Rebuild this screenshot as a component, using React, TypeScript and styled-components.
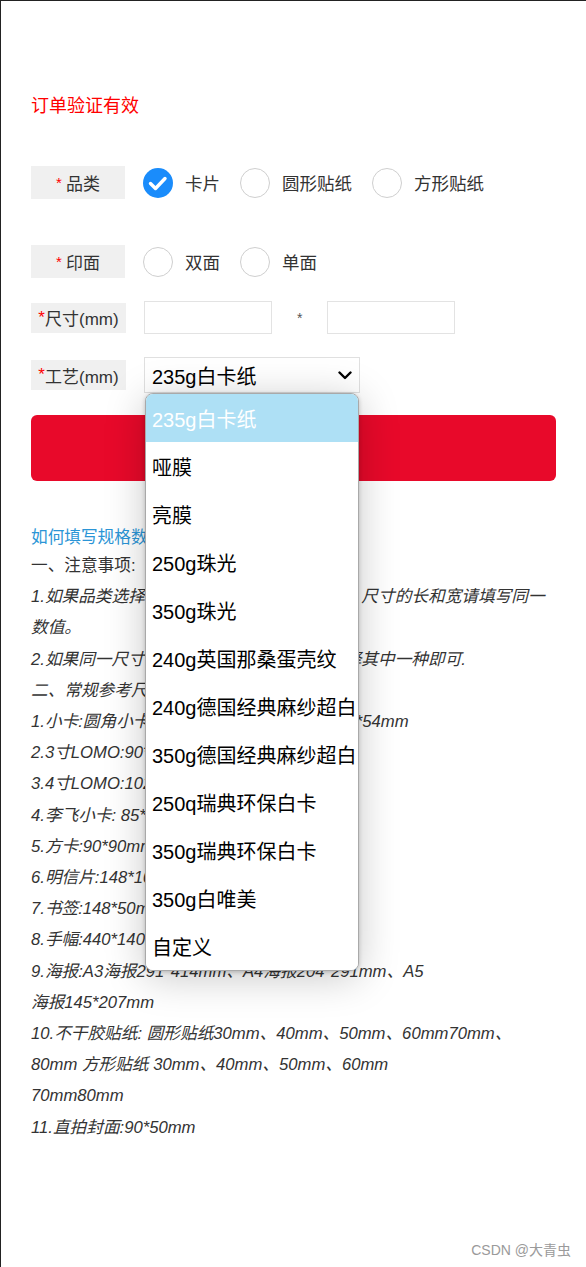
import React from "react";
import styled, { createGlobalStyle } from "styled-components";

const GlobalStyle = createGlobalStyle`
  html, body { margin: 0; padding: 0; background: #fff; }
  body { font-family: "Liberation Sans", "Noto Sans CJK SC", sans-serif; }
  * { box-sizing: border-box; }
`;

const Page = styled.div`
  position: relative;
  width: 586px;
  min-height: 1267px;
  border-top: 1px solid #222;
  border-left: 1px solid #222;
  padding: 93px 30px 0 30px;
  background: #fff;
`;

const Title = styled.div`
  color: #ff0000;
  font-size: 18px;
  line-height: 24px;
`;

const Form = styled.form`
  display: flex;
  flex-direction: column;
  margin: 48px 0 0 0;
`;

const FieldRow = styled.div<{ $gap: number }>`
  display: flex;
  align-items: center;
  margin-top: ${(p) => p.$gap}px;
`;

const FieldLabel = styled.div<{ $wide?: boolean }>`
  display: flex;
  align-items: center;
  justify-content: center;
  flex: none;
  width: ${(p) => (p.$wide ? 95 : 94)}px;
  height: ${(p) => (p.$wide ? 30 : 33)}px;
  background: #f0f0f0;
  color: #333;
  font-size: 17px;
  white-space: nowrap;
`;

const Star = styled.span<{ $spaced?: boolean }>`
  color: #ff0000;
  font-size: ${(p) => (p.$spaced ? 15 : 17)}px;
  margin-right: ${(p) => (p.$spaced ? 4 : 0)}px;
`;

const RadioGroup = styled.div`
  display: flex;
  align-items: center;
  gap: 20px;
  margin-left: 18px;
`;

const RadioOption = styled.label`
  display: flex;
  align-items: center;
  gap: 12px;
  font-size: 17.5px;
  color: #333;
  cursor: pointer;
`;

const RadioCircle = styled.span<{ $checked?: boolean }>`
  display: flex;
  align-items: center;
  justify-content: center;
  width: 30px;
  height: 30px;
  border-radius: 50%;
  border: ${(p) => (p.$checked ? "none" : "1px solid #cfcfcf")};
  background: ${(p) => (p.$checked ? "#1a8cfb" : "#fff")};
`;

const TextInput = styled.input<{ $first?: boolean }>`
  width: 128px;
  height: 33px;
  margin-left: ${(p) => (p.$first ? 18 : 0)}px;
  border: 1px solid #e3e3e3;
  outline: none;
  padding: 0 6px;
  font-size: 16px;
`;

const Times = styled.span`
  color: #555;
  font-size: 14px;
  margin: 0 25px 0 25px;
`;

const SelectWrap = styled.div`
  position: relative;
  margin-left: 18px;
  width: 216px;
  height: 36px;
`;

const SelectBox = styled.div`
  display: flex;
  align-items: center;
  justify-content: space-between;
  height: 100%;
  padding: 0 7px;
  border: 1px solid #e0e0e0;
  background: #fff;
  color: #000;
  font-size: 20px;
`;

const Dropdown = styled.ul`
  position: absolute;
  top: 100%;
  left: 1px;
  width: 214px;
  margin: 0;
  padding: 0;
  list-style: none;
  background: #fff;
  border: 1px solid #a9a9a9;
  border-radius: 8px;
  overflow: hidden;
  box-shadow: 0 6px 40px rgba(0, 0, 0, 0.22), 0 1px 4px rgba(0, 0, 0, 0.2);
  z-index: 10;
`;

const DropOption = styled.li<{ $active?: boolean }>`
  display: flex;
  align-items: center;
  height: 48px;
  padding-left: 6px;
  font-size: 20px;
  white-space: nowrap;
  color: ${(p) => (p.$active ? "#fff" : "#000")};
  background: ${(p) => (p.$active ? "#aee0f5" : "#fff")};
`;

const SubmitButton = styled.button`
  margin-top: 22px;
  width: 100%;
  height: 66px;
  border: none;
  border-radius: 6px;
  background: #e8092a;
  color: #fff;
  font-size: 20px;
  font-family: inherit;
`;

const Notes = styled.section`
  margin-top: 45px;
`;

const NoteHeading = styled.div`
  color: #2b95d6;
  font-size: 16.67px;
  line-height: 24px;
`;

const NoteLine = styled.div<{ $italic?: boolean }>`
  color: #333;
  font-size: 16.67px;
  line-height: 31.2px;
  white-space: nowrap;
  font-style: ${(p) => (p.$italic ? "italic" : "normal")};
`;

const Watermark = styled.div`
  position: absolute;
  right: 15px;
  bottom: 8px;
  font-size: 14px;
  color: #9a9a9a;
`;

const Check = () => (
  <svg width="30" height="30" viewBox="0 0 30 30" fill="none">
    <path d="M7.5 15.5l5 5 9.5-10" stroke="#fff" strokeWidth="3.4" strokeLinecap="round" strokeLinejoin="round" />
  </svg>
);

const Chevron = () => (
  <svg width="14" height="9" viewBox="0 0 14 9" fill="none">
    <path d="M1.5 1.5l5.5 5.5 5.5-5.5" stroke="#000" strokeWidth="2.4" strokeLinecap="round" strokeLinejoin="round" />
  </svg>
);

const options = [
  "235g白卡纸",
  "哑膜",
  "亮膜",
  "250g珠光",
  "350g珠光",
  "240g英国那桑蛋壳纹",
  "240g德国经典麻纱超白",
  "350g德国经典麻纱超白",
  "250q瑞典环保白卡",
  "350g瑞典环保白卡",
  "350g白唯美",
  "自定义",
];

const notes: { text: string; italic: boolean }[] = [
  { text: "一、注意事项:", italic: false },
  { text: "1.如果品类选择圆形贴纸或者方形贴纸的话，尺寸的长和宽请填写同一", italic: true },
  { text: "数值。", italic: true },
  { text: "2.如果同一尺寸有多种纸张可供选择，请选择其中一种即可.", italic: true },
  { text: "二、常规参考尺寸:", italic: true },
  { text: "1.小卡:圆角小卡86*54mm、方角小卡尺寸86*54mm", italic: true },
  { text: "2.3寸LOMO:90*64mm", italic: true },
  { text: "3.4寸LOMO:102*76mm", italic: true },
  { text: "4.李飞小卡: 85*55mm", italic: true },
  { text: "5.方卡:90*90mm", italic: true },
  { text: "6.明信片:148*100mm", italic: true },
  { text: "7.书签:148*50mm", italic: true },
  { text: "8.手幅:440*140mm", italic: true },
  { text: "9.海报:A3海报291*414mm、A4海报204*291mm、A5", italic: true },
  { text: "海报145*207mm", italic: true },
  { text: "10.不干胶贴纸: 圆形贴纸30mm、40mm、50mm、60mm70mm、", italic: true },
  { text: "80mm 方形贴纸 30mm、40mm、50mm、60mm", italic: true },
  { text: "70mm80mm", italic: true },
  { text: "11.直拍封面:90*50mm", italic: true },
];

export default function App() {
  return (
    <>
      <GlobalStyle />
      <Page>
        <Title>订单验证有效</Title>
        <Form onSubmit={(e) => e.preventDefault()}>
          <FieldRow $gap={0}>
            <FieldLabel>
              <Star $spaced>*</Star>品类
            </FieldLabel>
            <RadioGroup>
              <RadioOption>
                <RadioCircle $checked>
                  <Check />
                </RadioCircle>
                卡片
              </RadioOption>
              <RadioOption>
                <RadioCircle />
                圆形贴纸
              </RadioOption>
              <RadioOption>
                <RadioCircle />
                方形贴纸
              </RadioOption>
            </RadioGroup>
          </FieldRow>
          <FieldRow $gap={46}>
            <FieldLabel>
              <Star $spaced>*</Star>印面
            </FieldLabel>
            <RadioGroup>
              <RadioOption>
                <RadioCircle />
                双面
              </RadioOption>
              <RadioOption>
                <RadioCircle />
                单面
              </RadioOption>
            </RadioGroup>
          </FieldRow>
          <FieldRow $gap={23}>
            <FieldLabel $wide>
              <Star>*</Star>尺寸(mm)
            </FieldLabel>
            <TextInput $first />
            <Times>*</Times>
            <TextInput />
          </FieldRow>
          <FieldRow $gap={23}>
            <FieldLabel $wide>
              <Star>*</Star>工艺(mm)
            </FieldLabel>
            <SelectWrap>
              <SelectBox>
                <span>235g白卡纸</span>
                <Chevron />
              </SelectBox>
              <Dropdown>
                {options.map((o, i) => (
                  <DropOption key={o} $active={i === 0}>
                    {o}
                  </DropOption>
                ))}
              </Dropdown>
            </SelectWrap>
          </FieldRow>
          <SubmitButton type="submit">提交</SubmitButton>
        </Form>
        <Notes>
          <NoteHeading>如何填写规格数据?</NoteHeading>
          {notes.map((n, i) => (
            <NoteLine key={i} $italic={n.italic}>
              {n.text}
            </NoteLine>
          ))}
        </Notes>
        <Watermark>CSDN @大青虫</Watermark>
      </Page>
    </>
  );
}
